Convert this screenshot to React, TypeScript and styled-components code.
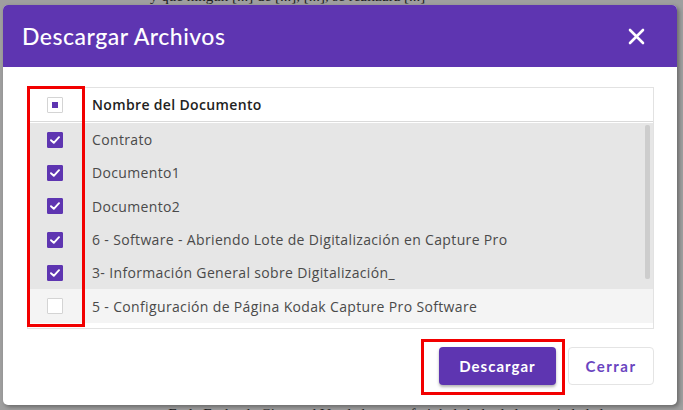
import styled, { createGlobalStyle } from 'styled-components'

const GlobalStyle = createGlobalStyle`
	html, body {
		margin: 0;
		padding: 0;
		background: #9f9f9f;
		overflow: hidden;
	}
`

const documents = [
	{ name: 'Contrato', checked: true },
	{ name: 'Documento1', checked: true },
	{ name: 'Documento2', checked: true },
	{ name: '6 - Software - Abriendo Lote de Digitalización en Capture Pro', checked: true },
	{ name: '3- Información General sobre Digitalización_', checked: true },
	{ name: '5 - Configuración de Página Kodak Capture Pro Software', checked: false },
]

const CheckIcon = () => (
	<svg width="10" height="8" viewBox="0 0 10 8" fill="none">
		<path d="M1 4.2 L3.8 6.8 L9 1.2" stroke="#fff" strokeWidth="1.9" strokeLinecap="round" strokeLinejoin="round" />
	</svg>
)

const CloseIcon = () => (
	<svg width="17" height="17" viewBox="0 0 17 17">
		<path d="M2 2 L15 15 M15 2 L2 15" stroke="#fff" strokeWidth="2.6" strokeLinecap="round" />
	</svg>
)

export const App = () => {
	return (
		<>
			<GlobalStyle />
			<Page>
				<DocLine $top>y que ningún [...] de [...], [...], se realizará [...]</DocLine>
				<Modal>
					<Header>
						<Title>Descargar Archivos</Title>
						<CloseButton>
							<CloseIcon />
						</CloseButton>
					</Header>
					<Body>
						<Table>
							<HeadRow>
								<CheckCell>
									<Box $variant="partial">
										<Dot />
									</Box>
								</CheckCell>
								<HeadText>Nombre del Documento</HeadText>
							</HeadRow>
							<Rows>
								{documents.map(doc => (
									<Row key={doc.name} $checked={doc.checked}>
										<CheckCell>
											<Box $variant={doc.checked ? 'checked' : 'empty'}>
												{doc.checked && <CheckIcon />}
											</Box>
										</CheckCell>
										<RowText>{doc.name}</RowText>
									</Row>
								))}
								<Thumb />
							</Rows>
							<Highlight $w={58} $h={241} $x={-1} $y={-2} />
						</Table>
					</Body>
					<Footer>
						<Actions>
							<PrimaryButton>Descargar</PrimaryButton>
							<Highlight $w={144} $h={56} $x={-18} $y={-8} />
						</Actions>
						<SecondaryButton>Cerrar</SecondaryButton>
					</Footer>
				</Modal>
				<DocLine>antes. En la Fecha de Cierre, el Vendedor transferirá el título de la propiedad al</DocLine>
			</Page>
		</>
	)
}

export default App

// Styles
const Page = styled.div`
	display: flex;
	flex-direction: column;
	height: 410px;
	width: 683px;
	overflow: hidden;
`
const DocLine = styled.div<{ $top?: boolean }>`
	color: #1d1d1d;
	display: flex;
	align-items: ${p => (p.$top ? 'flex-end' : 'flex-start')};
	font-family: 'Liberation Serif', serif;
	font-size: 15px;
	height: 5px;
	line-height: 18px;
	overflow: hidden;
	padding-left: ${p => (p.$top ? '150px' : '130px')};
	white-space: nowrap;
	flex-shrink: 0;
`
const Modal = styled.div`
	background: #fff;
	border-radius: 5px;
	box-shadow: 2px 2px 4px rgba(0, 0, 0, 0.35);
	display: flex;
	flex-direction: column;
	height: 400px;
	margin-left: 3px;
	overflow: hidden;
	width: 674px;
`
const Header = styled.div`
	align-items: center;
	background: #5e35b1;
	display: flex;
	height: 62px;
	justify-content: space-between;
	padding: 0 32px 0 19px;
	flex-shrink: 0;
`
const Title = styled.h2`
	color: #fff;
	font-family: Lato, sans-serif;
	font-size: 23px;
	font-weight: 500;
	letter-spacing: 0.5px;
	margin: 0;
`
const CloseButton = styled.div`
	display: flex;
	align-items: center;
`
const Body = styled.div`
	padding: 20px 23px 0 24px;
`
const Table = styled.div`
	border: 1px solid #e2e2e2;
	padding-bottom: 5px;
	position: relative;
`
const HeadRow = styled.div`
	align-items: center;
	border-bottom: 1px solid #dadada;
	display: flex;
	height: 33px;
`
const CheckCell = styled.div`
	display: flex;
	justify-content: center;
	width: 54px;
	flex-shrink: 0;
`
const Box = styled.div<{ $variant: 'checked' | 'empty' | 'partial' }>`
	align-items: center;
	background: ${p => (p.$variant === 'checked' ? '#5e35b1' : '#fff')};
	border: 1px solid ${p => (p.$variant === 'checked' ? '#5e35b1' : '#d4d4d4')};
	border-radius: 1px;
	box-sizing: border-box;
	display: flex;
	height: 16px;
	justify-content: center;
	width: 16px;
`
const Dot = styled.div`
	background: #5e35b1;
	height: 6px;
	width: 6px;
`
const HeadText = styled.div`
	color: #222;
	font-family: 'Open Sans', sans-serif;
	font-size: 14px;
	font-weight: 600;
	letter-spacing: 0.35px;
	padding-left: 10px;
`
const Rows = styled.div`
	padding-top: 1px;
	position: relative;
`
const Row = styled.div<{ $checked: boolean }>`
	align-items: center;
	background: ${p => (p.$checked ? '#e6e6e6' : '#f4f4f4')};
	display: flex;
	height: 33.3px;
`
const RowText = styled.div`
	color: #4a4a4a;
	font-family: 'Open Sans', sans-serif;
	font-size: 14px;
	letter-spacing: 0.35px;
	padding-left: 10px;
	white-space: nowrap;
`
const Thumb = styled.div`
	background: #cdcdcd;
	border-radius: 2px;
	height: 154px;
	position: absolute;
	right: 3px;
	top: 3px;
	width: 5px;
`
const Highlight = styled.div<{ $w: number; $h: number; $x: number; $y: number }>`
	border: 3px solid #f20000;
	box-sizing: border-box;
	height: ${p => p.$h}px;
	left: ${p => p.$x}px;
	pointer-events: none;
	position: absolute;
	top: ${p => p.$y}px;
	width: ${p => p.$w}px;
`
const Footer = styled.div`
	align-items: center;
	display: flex;
	gap: 12px;
	justify-content: flex-end;
	padding: 18px 23px 0 0;
`
const Actions = styled.div`
	position: relative;
	display: flex;
`
const PrimaryButton = styled.button`
	background: #5e35b1;
	border: none;
	border-radius: 4px;
	box-shadow: 0 2px 3px rgba(0, 0, 0, 0.3);
	color: #fff;
	font-family: Lato, sans-serif;
	font-size: 15px;
	font-weight: 700;
	height: 38px;
	letter-spacing: 1px;
	width: 117px;
`
const SecondaryButton = styled.button`
	background: #fff;
	border: 1px solid #e4e4e4;
	border-radius: 4px;
	color: #6a45c0;
	font-family: Lato, sans-serif;
	font-size: 15px;
	font-weight: 700;
	height: 38px;
	letter-spacing: 1.5px;
	width: 86px;
`
